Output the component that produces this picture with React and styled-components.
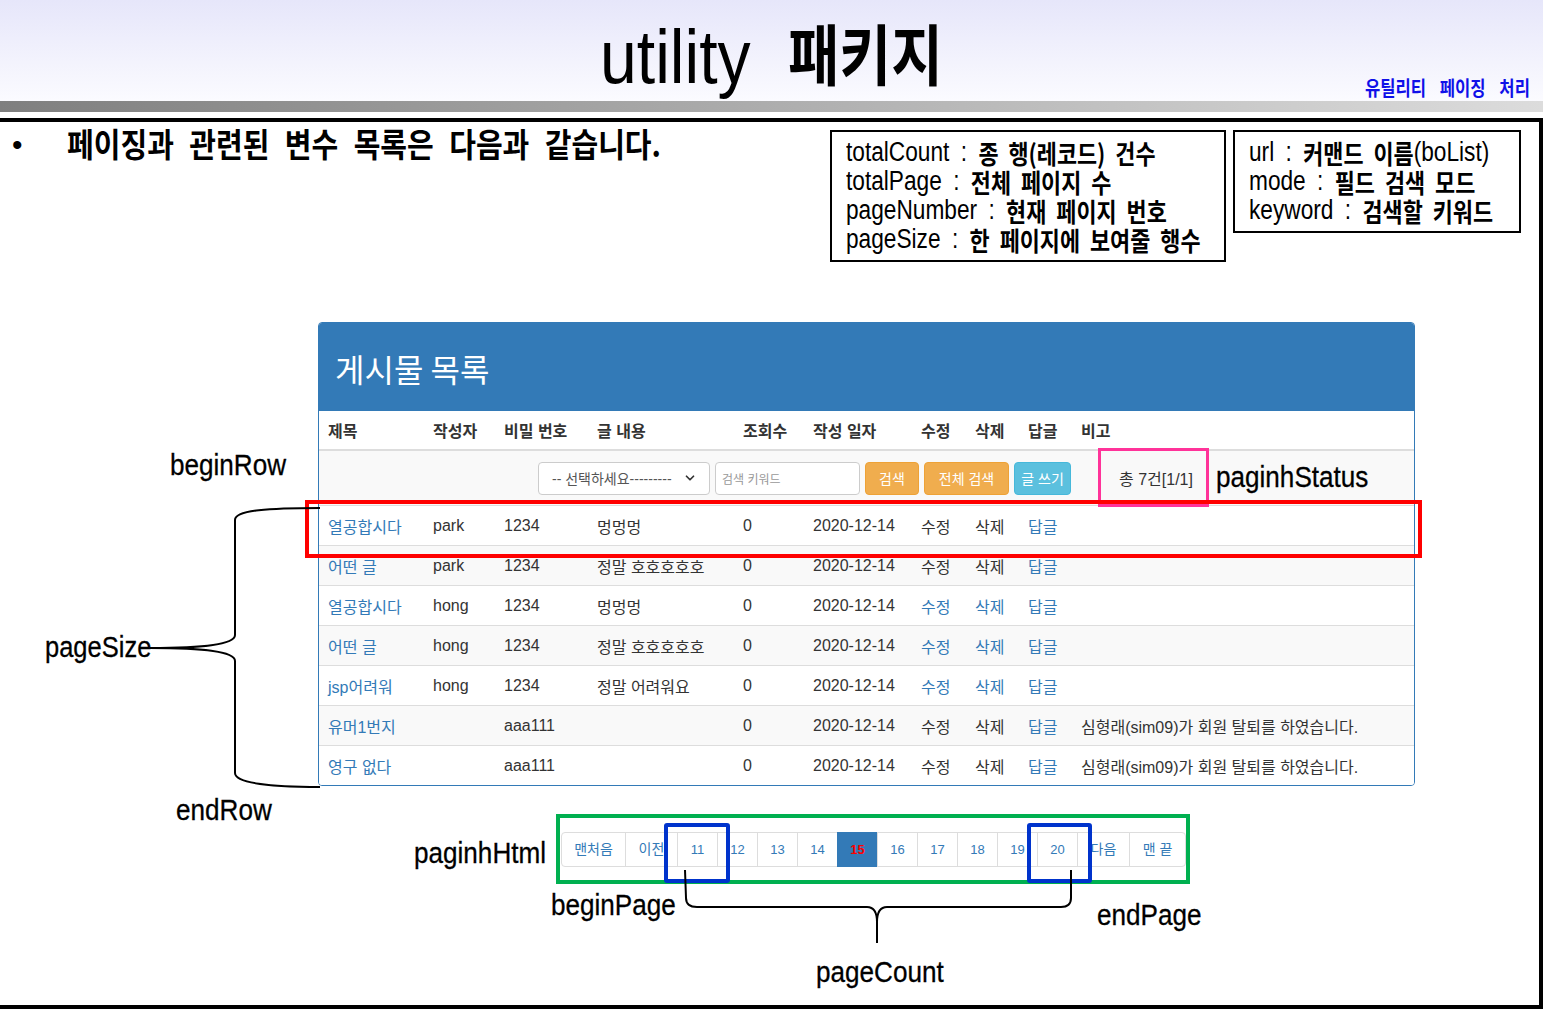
import React from "react";
import styled, { createGlobalStyle } from "styled-components";
import { ChevronDown } from "lucide-react";

const GlobalStyle = createGlobalStyle`
  html, body { margin: 0; padding: 0; background: #fff; }
  body {
    width: 1543px;
    height: 1017px;
    overflow: hidden;
    font-family: "Liberation Sans", "Noto Sans CJK KR", sans-serif;
  }
  * { box-sizing: border-box; }
`;

const Slide = styled.div`
  position: relative;
  width: 1543px;
  height: 1017px;
  background: #fff;
`;

const Header = styled.header`
  height: 101px;
  background: linear-gradient(#e6e6fa, #fbfbff);
  display: flex;
  align-items: flex-start;
`;

// condensed text, the slide uses a narrow headline font
const Squeeze = styled.span`
  display: inline-block;
  white-space: nowrap;
  width: ${(p) => (p.$w ? `${p.$w}px` : "auto")};
  transform: translateY(${(p) => p.$dy || 0}px) scaleX(${(p) => p.$x || 0.85});
  transform-origin: left center;
`;

const Title = styled.div`
  display: flex;
  align-items: baseline;
  margin: 14px 0 0 600px;
  height: 80px;
  line-height: 80px;
`;

const TitleLatin = styled(Squeeze)`
  font-family: "Liberation Sans", sans-serif;
  font-size: 76px;
  color: #000;
`;

const TitleKo = styled(Squeeze)`
  font-family: "Noto Sans CJK KR", sans-serif;
  font-weight: 700;
  font-size: 66px;
  color: #000;
`;

const SubTitle = styled(Squeeze)`
  margin: 76px 0 0 auto;
  margin-right: 8px;
  font-family: "Noto Sans CJK KR", sans-serif;
  font-weight: 700;
  font-size: 20px;
  line-height: 24px;
  word-spacing: 12px;
  color: #1010e8;
`;

const GreyBar = styled.div`
  height: 11px;
  background: linear-gradient(90deg, #7f7f7f, #dcdcdc);
`;

const Frame = styled.main`
  margin-top: 6px;
  height: 891px;
  border-top: 4px solid #000;
  border-right: 4px solid #000;
  border-bottom: 4px solid #000;
`;

const TopRow = styled.div`
  display: flex;
  align-items: flex-start;
  padding-top: 8px;
`;

const BulletLine = styled.div`
  display: flex;
  align-items: center;
  height: 30px;
  padding-left: 12px;
`;

const Bullet = styled.span`
  width: 55px;
  font-size: 30px;
  line-height: 30px;
  color: #000;
`;

const BulletText = styled(Squeeze)`
  font-family: "Noto Sans CJK KR", sans-serif;
  font-weight: 700;
  font-size: 33px;
  line-height: 30px;
  word-spacing: 10px;
  color: #000;
`;

const Boxes = styled.div`
  margin-left: auto;
  margin-right: 18px;
  display: flex;
  gap: 7px;
`;

const VarBox = styled.div`
  width: ${(p) => p.$w}px;
  height: ${(p) => p.$h}px;
  border: 2px solid #000;
  padding: 6px 0 0 14px;
  display: flex;
  flex-direction: column;
`;

const VarLine = styled(Squeeze)`
  display: block;
  height: 29px;
  font-size: 27px;
  line-height: 29px;
  word-spacing: 6px;
  color: #000;
  b {
    font-family: "Noto Sans CJK KR", sans-serif;
    font-weight: 700;
    font-size: 26px;
    line-height: 29px;
    vertical-align: top;
  }
`;

const Panel = styled.section`
  margin: 60px 0 0 318px;
  width: 1097px;
  border: 1px solid #337ab7;
  border-radius: 4px;
  overflow: hidden;
  color: #333;
`;

const PanelHead = styled.div`
  height: 88px;
  background: #337ab7;
  color: #fff;
  display: flex;
  align-items: center;
  padding: 2px 0 0 16px;
  font-family: "Noto Sans CJK KR", sans-serif;
  font-size: 32px;
`;

const Row = styled.div`
  display: grid;
  grid-template-columns: 105px 71px 93px 146px 70px 108px 54px 53px 53px 1fr;
  align-items: center;
  height: ${(p) => p.$h || 40}px;
  border-top: ${(p) => (p.$first ? "none" : "1px solid #ddd")};
  border-bottom: ${(p) => (p.$head ? "2px solid #ddd" : "none")};
  background: ${(p) => (p.$striped ? "#f9f9f9" : "#fff")};
  font-size: 16px;
  font-weight: ${(p) => (p.$head ? 700 : 400)};
`;

const Cell = styled.div`
  padding-left: 9px;
  white-space: nowrap;
  color: ${(p) => (p.$link ? "#337ab7" : "#333")};
`;

const SearchRow = styled.div`
  height: 54px;
  background: #f9f9f9;
  display: flex;
  align-items: center;
  gap: 5px;
  padding-left: 219px;
`;

const Select = styled.div`
  width: 172px;
  height: 33px;
  border: 1px solid #ccc;
  border-radius: 4px;
  background: #fff;
  display: flex;
  align-items: center;
  justify-content: space-between;
  padding: 0 12px 0 13px;
  font-size: 14px;
  color: #555;
`;

const Input = styled.div`
  width: 145px;
  height: 33px;
  border: 1px solid #ccc;
  border-radius: 4px;
  background: #fff;
  display: flex;
  align-items: center;
  padding-left: 6px;
  font-size: 12px;
  color: #999;
`;

const Button = styled.div`
  width: ${(p) => p.$w}px;
  height: 33px;
  border-radius: 4px;
  background: ${(p) => (p.$info ? "#5bc0de" : "#f0ad4e")};
  border: 1px solid ${(p) => (p.$info ? "#46b8da" : "#eea236")};
  color: #fff;
  font-size: 14px;
  display: flex;
  align-items: center;
  justify-content: center;
`;

const Status = styled.span`
  margin-left: 43px;
  font-size: 16px;
  color: #333;
`;

const Pager = styled.ul`
  display: flex;
  list-style: none;
  margin: 46px 0 0 561px;
  padding: 0;
`;

const PageItem = styled.li`
  width: ${(p) => p.$w}px;
  height: 35px;
  line-height: 33px;
  font-size: ${(p) => (p.$ko ? 14 : 13)}px;
  text-align: center;
  margin-left: -1px;
  border: 1px solid ${(p) => (p.$active ? "#337ab7" : "#ddd")};
  background: ${(p) => (p.$active ? "#337ab7" : "#fff")};
  color: ${(p) => (p.$active ? "#ff0000" : "#337ab7")};
  font-weight: ${(p) => (p.$active ? 700 : 400)};
  &:first-child { border-radius: 4px 0 0 4px; margin-left: 0; }
  &:last-child { border-radius: 0 4px 4px 0; }
`;

const Mark = styled.div`
  position: absolute;
  left: ${(p) => p.$l}px;
  top: ${(p) => p.$t}px;
  width: ${(p) => p.$w}px;
  height: ${(p) => p.$h}px;
  border: ${(p) => p.$b || 3}px solid ${(p) => p.$c};
  border-radius: ${(p) => p.$r || 0}px;
`;

const Label = styled(Squeeze)`
  position: absolute;
  left: ${(p) => p.$l}px;
  top: ${(p) => p.$t}px;
  font-size: 30px;
  line-height: 30px;
  color: #000;
  -webkit-text-stroke: 0.3px #000;
`;

const Brace = styled.svg`
  position: absolute;
  left: ${(p) => p.$l}px;
  top: ${(p) => p.$t}px;
  overflow: visible;
`;

const headCols = ["제목", "작성자", "비밀 번호", "글 내용", "조회수", "작성 일자", "수정", "삭제", "답글", "비고"];

const note = "심형래(sim09)가 회원 탈퇴를 하였습니다.";
const rows = [
  { title: "열공합시다", writer: "park", pw: "1234", content: "멍멍멍", links: false },
  { title: "어떤 글", writer: "park", pw: "1234", content: "정말 호호호호호", links: false },
  { title: "열공합시다", writer: "hong", pw: "1234", content: "멍멍멍", links: true },
  { title: "어떤 글", writer: "hong", pw: "1234", content: "정말 호호호호호", links: true },
  { title: "jsp어려워", writer: "hong", pw: "1234", content: "정말 어려워요", links: true },
  { title: "유머1번지", writer: "", pw: "aaa111", content: "", links: false, note },
  { title: "영구 없다", writer: "", pw: "aaa111", content: "", links: false, note },
];

const pages = [
  { t: "맨처음", w: 65 },
  { t: "이전", w: 53 },
  ...Array.from({ length: 10 }, (_, i) => ({ t: String(11 + i), w: 41 })),
  { t: "다음", w: 53 },
  { t: "맨 끝", w: 57 },
];

export default function App() {
  return (
    <Slide>
      <GlobalStyle />
      <Header>
        <Title>
          <TitleLatin $x={0.87} $w={188}>utility</TitleLatin>
          <TitleKo $x={0.85} $dy={-3}>패키지</TitleKo>
        </Title>
        <SubTitle $x={0.83} $w={170}>유틸리티 페이징 처리</SubTitle>
      </Header>
      <GreyBar />
      <Frame>
        <TopRow>
          <BulletLine>
            <Bullet>•</Bullet>
            <BulletText $x={0.88} $dy={-2}>페이징과 관련된 변수 목록은 다음과 같습니다.</BulletText>
          </BulletLine>
          <Boxes>
            <VarBox $w={396} $h={132}>
              <VarLine $x={0.84}>totalCount : <b>종 행(레코드) 건수</b></VarLine>
              <VarLine $x={0.84}>totalPage : <b>전체 페이지 수</b></VarLine>
              <VarLine $x={0.84}>pageNumber : <b>현재 페이지 번호</b></VarLine>
              <VarLine $x={0.84}>pageSize : <b>한 페이지에 보여줄 행수</b></VarLine>
            </VarBox>
            <VarBox $w={288} $h={103}>
              <VarLine $x={0.84}>url : <b>커맨드 이름</b>(boList)</VarLine>
              <VarLine $x={0.84}>mode : <b>필드 검색 모드</b></VarLine>
              <VarLine $x={0.84}>keyword : <b>검색할 키워드</b></VarLine>
            </VarBox>
          </Boxes>
        </TopRow>

        <Panel>
          <PanelHead>게시물 목록</PanelHead>
          <Row $head $first>
            {headCols.map((h) => (
              <Cell key={h}>{h}</Cell>
            ))}
          </Row>
          <SearchRow>
            <Select>
              <span>-- 선택하세요---------</span>
              <ChevronDown size={14} strokeWidth={3} color="#333" />
            </Select>
            <Input>검색 키워드</Input>
            <Button $w={54}>검색</Button>
            <Button $w={85}>전체 검색</Button>
            <Button $w={57} $info>글 쓰기</Button>
            <Status>총 7건[1/1]</Status>
          </SearchRow>
          {rows.map((r, i) => (
            <Row key={i} $striped={i % 2 === 1} $h={40}>
              <Cell $link>{r.title}</Cell>
              <Cell>{r.writer}</Cell>
              <Cell>{r.pw}</Cell>
              <Cell>{r.content}</Cell>
              <Cell>0</Cell>
              <Cell>2020-12-14</Cell>
              <Cell $link={r.links}>수정</Cell>
              <Cell $link={r.links}>삭제</Cell>
              <Cell $link>답글</Cell>
              <Cell>{r.note}</Cell>
            </Row>
          ))}
        </Panel>

        <Pager>
          {pages.map((p) => (
            <PageItem key={p.t} $w={p.w} $active={p.t === "15"} $ko={isNaN(Number(p.t))}>
              {p.t}
            </PageItem>
          ))}
        </Pager>
      </Frame>

      <Mark $l={1098} $t={448} $w={111} $h={59} $c="#ff3399" />
      <Mark $l={305} $t={500} $w={1117} $h={58} $c="#ff0000" $b={4} />
      <Mark $l={556} $t={814} $w={634} $h={70} $c="#00b050" $b={4} />
      <Mark $l={664} $t={823} $w={66} $h={60} $c="#0033cc" $b={4} $r={3} />
      <Mark $l={1027} $t={823} $w={65} $h={60} $c="#0033cc" $b={4} $r={3} />

      <Label $x={0.87} $l={1216} $t={462}>paginhStatus</Label>
      <Label $x={0.87} $l={170} $t={450}>beginRow</Label>
      <Label $x={0.85} $l={45} $t={632}>pageSize</Label>
      <Label $x={0.87} $l={176} $t={795}>endRow</Label>
      <Label $x={0.87} $l={414} $t={838}>paginhHtml</Label>
      <Label $x={0.87} $l={551} $t={890}>beginPage</Label>
      <Label $x={0.87} $l={1097} $t={900}>endPage</Label>
      <Label $x={0.87} $l={816} $t={957}>pageCount</Label>

      <Brace $l={140} $t={500} width="185" height="295" viewBox="0 0 185 295">
        <path
          d="M 180 8 C 130 8, 95 10, 95 20 L 95 135 C 95 145, 60 148, 10 148 C 60 148, 95 151, 95 161 L 95 273 C 95 283, 130 287, 180 287"
          fill="none"
          stroke="#000"
          strokeWidth="2"
        />
      </Brace>
      <Brace $l={675} $t={862} width="405" height="90" viewBox="0 0 405 90">
        <path
          d="M 10 8 L 11 36 C 11 42, 14 45, 22 45 L 192 45 C 199 45, 202 50, 202 60 L 202 81 M 202 60 C 202 50, 205 45, 212 45 L 386 45 C 393 45, 396 42, 396 36 L 396 8"
          fill="none"
          stroke="#000"
          strokeWidth="2"
        />
      </Brace>
    </Slide>
  );
}
